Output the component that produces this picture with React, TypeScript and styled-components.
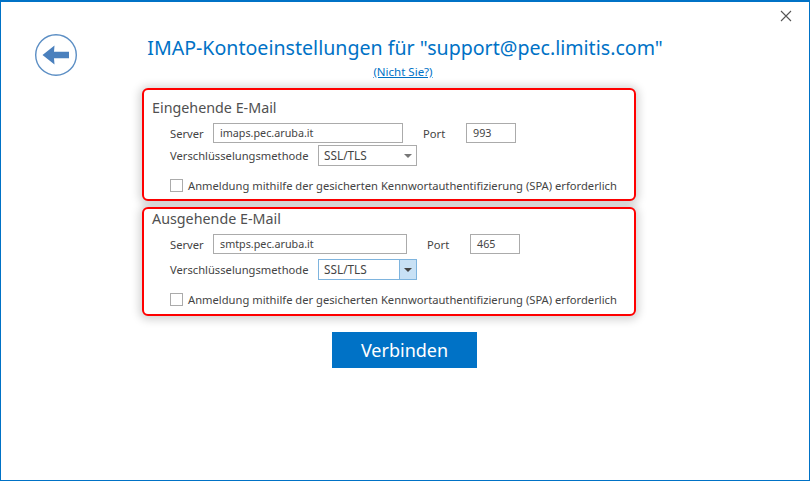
import React from 'react'
import styled, { createGlobalStyle } from 'styled-components'

const GlobalStyle = createGlobalStyle`
  html, body {
    margin: 0;
    padding: 0;
    background: #fff;
  }
  * {
    box-sizing: border-box;
  }
`

const BackIcon = () => (
  <svg width="44" height="44" viewBox="0 0 44 44">
    <circle cx="22" cy="22" r="20.3" fill="#fff" stroke="#5b8ec4" strokeWidth="1.4" />
    <path d="M8.5 22 L20.5 12.5 L20 18.8 L35 18.8 L35 25.2 L20 25.2 L20.5 31.5 Z" fill="#4a80bd" />
  </svg>
)

const CloseIcon = () => (
  <svg width="12" height="12" viewBox="0 0 12 12">
    <path d="M1 1 L11 11 M11 1 L1 11" stroke="#555" strokeWidth="1.1" fill="none" />
  </svg>
)

const Section = ({ title, server, port, focused, inputWidth, compact }: {
  title: string
  server: string
  port: string
  focused?: boolean
  inputWidth: number
  compact?: boolean
}) => (
  <Panel $compact={compact}>
    <PanelTitle>{title}</PanelTitle>
    <Row>
      <ServerLabel>Server</ServerLabel>
      <TextBox $w={inputWidth}>{server}</TextBox>
      <PortLabel>Port</PortLabel>
      <TextBox $w={50}>{port}</TextBox>
    </Row>
    <MethodRow $compact={compact}>
      <MethodLabel>Verschlüsselungsmethode</MethodLabel>
      <Select $focused={focused}>
        <SelectText>SSL/TLS</SelectText>
        <SelectButton $focused={focused}><Caret $focused={focused} /></SelectButton>
      </Select>
    </MethodRow>
    <CheckRow>
      <Checkbox />
      <CheckText>Anmeldung mithilfe der gesicherten Kennwortauthentifizierung (SPA) erforderlich</CheckText>
    </CheckRow>
  </Panel>
)

const App = () => {
  return (
    <Window>
      <GlobalStyle />
      <Close><CloseIcon /></Close>
      <Back><BackIcon /></Back>
      <Title>IMAP-Kontoeinstellungen für "support@pec.limitis.com"</Title>
      <NotYou>(Nicht Sie?)</NotYou>
      <Panels>
        <Section title="Eingehende E-Mail" server="imaps.pec.aruba.it" port="993" inputWidth={190} />
        <Section title="Ausgehende E-Mail" server="smtps.pec.aruba.it" port="465" inputWidth={194} focused compact />
      </Panels>
      <Connect>Verbinden</Connect>
    </Window>
  )
}

export default App

const Window = styled.div`
  position: relative;
  width: 810px;
  height: 481px;
  background: #fff;
  border: 1px solid #0072c6;
  border-top-width: 2px;
  display: flex;
  flex-direction: column;
  align-items: center;
  font-family: "Noto Sans", "Open Sans", sans-serif;
  color: #444;
  overflow: hidden;
`
const Close = styled.div`
  position: absolute;
  top: 8px;
  right: 17px;
  width: 12px;
  height: 12px;
  display: flex;
`
const Back = styled.div`
  position: absolute;
  top: 31px;
  left: 33px;
  display: flex;
`
const Title = styled.h1`
  margin: 30px 0 0 0;
  font-size: 19.6px;
  line-height: 32px;
  font-weight: 400;
  color: #0072c6;
  white-space: nowrap;
`
const NotYou = styled.a`
  margin: 0 0 0 -4px;
  font-size: 11.5px;
  line-height: 16px;
  color: #0072c6;
  text-decoration: underline;
`
const Panels = styled.div`
  align-self: flex-start;
  margin: 8px 0 0 141px;
  width: 494px;
  display: flex;
  flex-direction: column;
  gap: 6px;
`
const Panel = styled.section<{ $compact?: boolean }>`
  height: ${({ $compact }) => ($compact ? 109 : 113)}px;
  border: 2px solid #f00;
  border-radius: 6px;
  box-shadow: 0 1px 9px 3px rgba(0, 0, 0, 0.17);
  background: #fff;
  padding: ${({ $compact }) => ($compact ? 1 : 9)}px 0 0 8px;
`
const PanelTitle = styled.h2`
  margin: 0;
  font-size: 14.3px;
  line-height: 18px;
  font-weight: 400;
  color: #505050;
  white-space: nowrap;
`
const Row = styled.div`
  display: flex;
  align-items: center;
  margin: 6px 0 0 18px;
  height: 20px;
`
const ServerLabel = styled.span`
  width: 43px;
  font-size: 11.2px;
  color: #444;
`
const TextBox = styled.div<{ $w: number }>`
  width: ${({ $w }) => $w}px;
  height: 20px;
  border: 1px solid #ababab;
  padding-left: 6px;
  font-size: 10.75px;
  line-height: 18px;
  color: #444;
  white-space: nowrap;
`
const PortLabel = styled.span`
  margin-left: 20px;
  width: 43px;
  font-size: 11.2px;
  color: #444;
`
const MethodRow = styled.div<{ $compact?: boolean }>`
  display: flex;
  align-items: center;
  margin: ${({ $compact }) => ($compact ? 5 : 2)}px 0 0 18px;
  height: 21px;
`
const MethodLabel = styled.span`
  width: 148px;
  font-size: 11.2px;
  color: #444;
  white-space: nowrap;
`
const Select = styled.div<{ $focused?: boolean }>`
  width: 99px;
  height: 21px;
  display: flex;
  border: 1px solid ${({ $focused }) => ($focused ? '#7eb4de' : '#ababab')};
  background: #fff;
`
const SelectText = styled.span`
  flex: 1;
  padding-left: 5px;
  font-size: 11.8px;
  line-height: 19px;
  color: #444;
`
const SelectButton = styled.span<{ $focused?: boolean }>`
  width: 17px;
  display: flex;
  align-items: center;
  justify-content: center;
  background: ${({ $focused }) => ($focused ? '#c8e1f5' : '#fff')};
  border-left: 1px solid ${({ $focused }) => ($focused ? '#7eb4de' : 'transparent')};
`
const Caret = styled.i<{ $focused?: boolean }>`
  width: 0;
  height: 0;
  border-left: 4px solid transparent;
  border-right: 4px solid transparent;
  border-top: 4px solid ${({ $focused }) => ($focused ? '#444' : '#777')};
`
const CheckRow = styled.div`
  display: flex;
  align-items: center;
  margin: 12px 0 0 18px;
  height: 14px;
`
const Checkbox = styled.span`
  width: 13px;
  height: 13px;
  border: 1px solid #ababab;
  background: #fff;
`
const CheckText = styled.span`
  margin-left: 5px;
  font-size: 11.2px;
  color: #444;
  white-space: nowrap;
`
const Connect = styled.button`
  margin: 16px 0 0 -1px;
  width: 145px;
  height: 36px;
  border: none;
  background: #0072c6;
  color: #fff;
  font-family: inherit;
  font-size: 18px;
  padding: 0;
`
